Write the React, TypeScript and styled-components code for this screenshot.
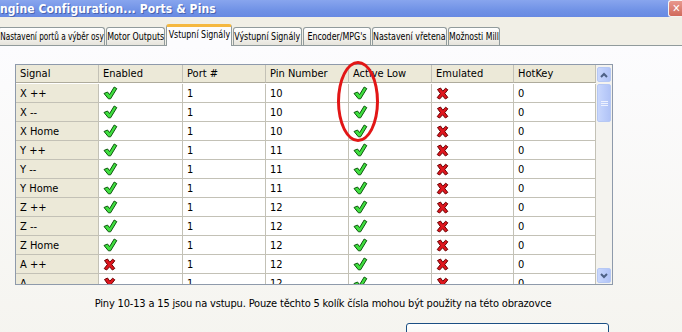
import React from 'react';
import styled, { createGlobalStyle } from 'styled-components';

const GlobalStyle = createGlobalStyle`
  html, body {
    margin: 0;
    padding: 0;
    width: 682px;
    height: 332px;
    overflow: hidden;
    background: #f1efe6;
  }
  body {
    font-family: "DejaVu Sans", "Liberation Sans", sans-serif;
    font-stretch: condensed;
    font-size: 11px;
    color: #000;
  }
`;

const Window = styled.div`
  position: relative;
  width: 682px;
  height: 332px;
  display: flex;
  flex-direction: column;
  overflow: hidden;
  background: #f1efe6;
`;

const TitleBar = styled.div`
  height: 17px;
  flex-shrink: 0;
  display: flex;
  align-items: center;
  justify-content: space-between;
  background: linear-gradient(#88a5ee, #7092e6 60%, #6789e2);
`;

const TitleText = styled.span`
  color: #fff;
  font-weight: bold;
  font-size: 12px;
  letter-spacing: 0.1px;
  text-shadow: 1px 1px 0 #4a64b0;
  white-space: nowrap;
`;

const CloseButton = styled.div`
  width: 15px;
  height: 15px;
  margin-right: -2px;
  border: 1px solid #f4f4f4;
  border-right: none;
  border-radius: 3px 0 0 3px;
  background: linear-gradient(#e8988e, #d06a5c);
  color: #fff;
  font-size: 11px;
  font-weight: bold;
  display: flex;
  align-items: center;
  justify-content: center;
`;

const TabStrip = styled.div`
  height: 21px;
  margin-top: 7px;
  margin-left: -2px;
  display: flex;
  align-items: flex-end;
  gap: 1px;
  flex-shrink: 0;
`;

const Tab = styled.div<{ $w: number; $active?: boolean }>`
  box-sizing: border-box;
  width: ${p => p.$w}px;
  height: ${p => (p.$active ? 22 : 18)}px;
  margin-bottom: ${p => (p.$active ? -1 : 0)}px;
  position: relative;
  z-index: ${p => (p.$active ? 2 : 1)};
  border: 1px solid #919b9c;
  border-bottom: none;
  border-top: ${p => (p.$active ? '3px solid #f5b840' : '1px solid #919b9c')};
  border-radius: 3px 3px 0 0;
  background: ${p => (p.$active ? '#fcfcfe' : 'linear-gradient(#ffffff, #f2f1ec 60%, #e6e4dc)')};
  display: flex;
  align-items: ${p => (p.$active ? 'flex-start' : 'center')};
  padding-top: ${p => (p.$active ? 1 : 0)}px;
  justify-content: center;
  overflow: visible;
`;

const TabLabel = styled.span<{ $scale: number }>`
  display: inline-block;
  white-space: nowrap;
  font-size: 11px;
  transform: scaleX(${p => p.$scale});
  transform-origin: center;
`;

const Panel = styled.div`
  flex: 1;
  border-top: 1px solid #919b9c;
  background: linear-gradient(#fcfcfe, #f5f4ef);
  padding: 18px 0 0 15px;
  display: flex;
  flex-direction: column;
`;

const Grid = styled.div`
  box-sizing: border-box;
  width: 598px;
  height: 221px;
  border: 1px solid #8e9aab;
  display: flex;
  overflow: hidden;
  background: #fff;
`;

const Table = styled.div`
  display: grid;
  grid-template-columns: 83px 84px 83px 83px 83px 82px 82px;
  grid-auto-rows: 19px;
  align-content: start;
  overflow: hidden;
`;

const Cell = styled.div<{ $head?: boolean; $label?: boolean }>`
  box-sizing: border-box;
  height: ${p => (p.$head ? 18 : 19)}px;
  border-right: 1px solid #c3c1b6;
  border-bottom: 1px solid ${p => (p.$head ? '#aeab9c' : '#c3c1b6')};
  background: ${p => (p.$head || p.$label ? '#ece9d8' : '#fff')};
  display: flex;
  align-items: center;
  padding-left: 4px;
  white-space: nowrap;
  overflow: hidden;
`;

const Scrollbar = styled.div`
  width: 16px;
  flex-shrink: 0;
  box-sizing: border-box;
  padding: 2px 1px 0 1px;
  background: #f4f3ef;
  display: flex;
  flex-direction: column;
`;

const ScrollPart = styled.div<{ $h: number }>`
  box-sizing: border-box;
  height: ${p => p.$h}px;
  border: 1px solid #b6c8f4;
  border-radius: 2px;
  background: linear-gradient(90deg, #c9d7fc, #bccdfa 50%, #b1c3f6);
  display: flex;
  align-items: center;
  justify-content: center;
`;

const Track = styled.div`
  flex: 1;
`;

const Footer = styled.div`
  width: 616px;
  margin-top: 12px;
  text-align: center;
  white-space: nowrap;
  font-size: 11px;
  letter-spacing: -0.17px;
`;

const ButtonRow = styled.div`
  display: flex;
  margin-top: 13px;
  padding-left: 391px;
`;

const PushButton = styled.div`
  box-sizing: border-box;
  width: 203px;
  height: 22px;
  border: 1px solid #1c4f84;
  border-radius: 3px;
  background: linear-gradient(#ffffff, #f0efe9);
`;

const Annotation = styled.div`
  position: absolute;
  left: 337px;
  top: 61px;
  width: 42px;
  height: 81px;
  box-sizing: border-box;
  border: 3px solid #e21616;
  border-radius: 50%;
  pointer-events: none;
`;

const Check = () => (
  <svg width="15" height="14" viewBox="0 0 15 14">
    <path
      d="M1 7.5 L4.5 6 L6.6 8.6 L11.2 1 L13.8 2.6 L7.6 12.8 L5.4 12.8 Z"
      fill="#3fdf3f"
      stroke="#0d560d"
      strokeWidth="1"
      strokeLinejoin="round"
    />
  </svg>
);

const Cross = () => (
  <svg width="13" height="13" viewBox="0 0 13 13">
    <path
      d="M1.5 2.5 L4.5 1 L6.8 4.2 L9.6 1.2 L11.8 2.8 L8.8 6.6 L11.8 10.4 L9.4 12 L6.6 8.8 L3.6 12 L1.2 10.6 L4.4 6.6 Z"
      fill="#e0161e"
      stroke="#6b0000"
      strokeWidth="1"
      strokeLinejoin="round"
    />
  </svg>
);

const ArrowUp = () => (
  <svg width="8" height="6" viewBox="0 0 8 6">
    <path d="M1 5 L4 2 L7 5" fill="none" stroke="#4d6185" strokeWidth="2" />
  </svg>
);

const ArrowDown = () => (
  <svg width="8" height="6" viewBox="0 0 8 6">
    <path d="M1 1 L4 4 L7 1" fill="none" stroke="#4d6185" strokeWidth="2" />
  </svg>
);

const Grip = () => (
  <svg width="7" height="7" viewBox="0 0 7 7">
    <path d="M0 1.5 H7 M0 3.5 H7 M0 5.5 H7" stroke="#eef2fe" strokeWidth="1" />
  </svg>
);

const tabs = [
  { label: 'Nastavení portů a výběr osy', w: 107, scale: 0.74 },
  { label: 'Motor Outputs', w: 59, scale: 0.8 },
  { label: 'Vstupní Signály', w: 66, scale: 0.8, active: true },
  { label: 'Výstupní Signály', w: 69, scale: 0.8 },
  { label: "Encoder/MPG's", w: 68, scale: 0.8 },
  { label: 'Nastavení vřetena', w: 75, scale: 0.8 },
  { label: 'Možnosti Mill', w: 52, scale: 0.78 },
];

const headers = ['Signal', 'Enabled', 'Port #', 'Pin Number', 'Active Low', 'Emulated', 'HotKey'];

const rows = [
  { signal: 'X ++', enabled: true, pin: 10 },
  { signal: 'X --', enabled: true, pin: 10 },
  { signal: 'X Home', enabled: true, pin: 10 },
  { signal: 'Y ++', enabled: true, pin: 11 },
  { signal: 'Y --', enabled: true, pin: 11 },
  { signal: 'Y Home', enabled: true, pin: 11 },
  { signal: 'Z ++', enabled: true, pin: 12 },
  { signal: 'Z --', enabled: true, pin: 12 },
  { signal: 'Z Home', enabled: true, pin: 12 },
  { signal: 'A ++', enabled: false, pin: 12 },
  { signal: 'A --', enabled: false, pin: 12 },
];

const App: React.FC = () => {
  return (
    <Window>
      <GlobalStyle />
      <TitleBar>
        <TitleText>ngine Configuration... Ports &amp; Pins</TitleText>
        <CloseButton>✕</CloseButton>
      </TitleBar>
      <TabStrip>
        {tabs.map(t => (
          <Tab key={t.label} $w={t.w} $active={t.active}>
            <TabLabel $scale={t.scale}>{t.label}</TabLabel>
          </Tab>
        ))}
      </TabStrip>
      <Panel>
        <Grid>
          <Table>
            {headers.map(h => (
              <Cell key={h} $head>
                {h}
              </Cell>
            ))}
            {rows.map(r => (
              <React.Fragment key={r.signal}>
                <Cell $label>{r.signal}</Cell>
                <Cell>{r.enabled ? <Check /> : <Cross />}</Cell>
                <Cell>1</Cell>
                <Cell>{r.pin}</Cell>
                <Cell>
                  <Check />
                </Cell>
                <Cell>
                  <Cross />
                </Cell>
                <Cell>0</Cell>
              </React.Fragment>
            ))}
          </Table>
          <Scrollbar>
            <ScrollPart $h={15}>
              <ArrowUp />
            </ScrollPart>
            <ScrollPart $h={38} style={{ marginTop: 2 }}>
              <Grip />
            </ScrollPart>
            <Track />
            <ScrollPart $h={15} style={{ marginBottom: 1 }}>
              <ArrowDown />
            </ScrollPart>
          </Scrollbar>
        </Grid>
        <Footer>Piny 10-13 a 15 jsou na vstupu. Pouze těchto 5 kolík čísla mohou být použity na této obrazovce</Footer>
        <ButtonRow>
          <PushButton />
        </ButtonRow>
      </Panel>
      <Annotation />
    </Window>
  );
};

export default App;
